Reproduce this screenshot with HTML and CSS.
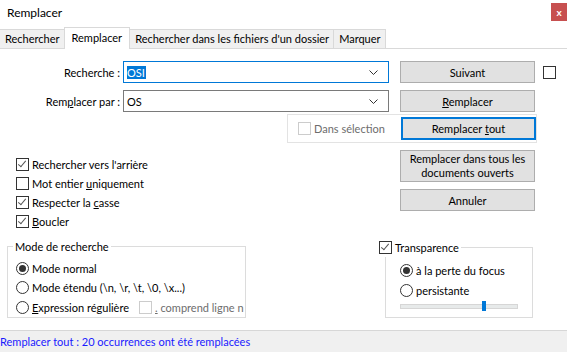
FILE: index.html
```html
<!DOCTYPE html>
<html lang="fr">
<head>
    <meta charset="UTF-8">
    <title>Remplacer</title>
    <link rel="stylesheet" href="styles.css">
</head>
<body>
    <!-- Title bar -->
    <div class="titlebar">
        <span class="title">Remplacer</span>
        <span class="close">x</span>
    </div>

    <!-- Tabs -->
    <div class="tabs">
        <span class="tab">Rechercher</span>
        <span class="tab active">Remplacer</span>
        <span class="tab">Rechercher dans les fichiers d'un dossier</span>
        <span class="tab">Marquer</span>
    </div>

    <div class="content">
        <!-- Search field -->
        <div class="row">
            <label class="field-label">Recherche :</label>
            <div class="combo focused">
                <span class="sel">OSI</span>
                <svg class="arrow" width="9" height="5" viewBox="0 0 9 5"><path d="M0.5 0.5 L4.5 4.5 L8.5 0.5" fill="none" stroke="#333"/></svg>
            </div>
            <button class="btn">Suivant</button>
            <span class="check small-gap"></span>
        </div>

        <!-- Replace field -->
        <div class="row">
            <label class="field-label">Rem<u>p</u>lacer par :</label>
            <div class="combo">
                <span>OS</span>
                <svg class="arrow" width="9" height="5" viewBox="0 0 9 5"><path d="M0.5 0.5 L4.5 4.5 L8.5 0.5" fill="none" stroke="#333"/></svg>
            </div>
            <button class="btn"><u>R</u>emplacer</button>
        </div>

        <!-- Selection box -->
        <div class="selection-box">
            <span class="opt disabled"><span class="check dim"></span><span>Dans sélection</span></span>
            <button class="btn default">Remplacer <u>t</u>out</button>
        </div>

        <!-- Options + more buttons -->
        <div class="middle">
            <div class="options">
                <span class="opt"><span class="check on"></span><span>Rechercher vers l'arrière</span></span>
                <span class="opt"><span class="check"></span><span>Mot entier <u>u</u>niquement</span></span>
                <span class="opt"><span class="check on"></span><span>Respecter la <u>c</u>asse</span></span>
                <span class="opt"><span class="check on"></span><span><u>B</u>oucler</span></span>
            </div>
            <div class="buttons">
                <button class="btn tall">Remplacer dans tous les<br>documents ouverts</button>
                <button class="btn">Annuler</button>
            </div>
        </div>

        <!-- Group boxes -->
        <div class="groups">
            <fieldset class="group mode">
                <legend>Mode de recherche</legend>
                <span class="opt"><span class="radio on"></span><span>Mode normal</span></span>
                <span class="opt"><span class="radio"></span><span>Mode étendu (\n, \r, \t, \0, \x...)</span></span>
                <span class="opt"><span class="radio"></span><span><u>E</u>xpression régulière</span>
                    <span class="opt disabled regex"><span class="check dim"></span><span><u>.</u> comprend ligne n</span></span>
                </span>
            </fieldset>
            <fieldset class="group transp">
                <legend><span class="opt"><span class="check on"></span><span>Transparence</span></span></legend>
                <span class="opt"><span class="radio on"></span><span>à la perte du focus</span></span>
                <span class="opt"><span class="radio"></span><span>persistante</span></span>
                <div class="slider"><span class="thumb"></span></div>
            </fieldset>
        </div>
    </div>

    <!-- Status bar -->
    <div class="status">Remplacer tout : 20 occurrences ont été remplacées</div>
</body>
</html>
```

FILE: styles.css
```css
body {
    font-family: Lato, "Noto Sans", sans-serif;
    font-size: 11px;
    color: #000;
    margin: 0;
    width: 567px;
    height: 352px;
    background-color: #fff;
    overflow: hidden;
    display: flex;
    flex-direction: column;
}

u {
    text-decoration: underline;
}

/* Title bar */
.titlebar {
    flex: none;
    height: 28px;
    display: flex;
    align-items: center;
    justify-content: space-between;
    padding-left: 7px;
    font-size: 12px;
}

.title {
    margin-top: -4px;
}

.close {
    width: 16px;
    height: 18px;
    margin-top: -5px;
    background-color: #c75050;
    color: #fff;
    font-weight: bold;
    font-size: 10px;
    display: flex;
    align-items: center;
    justify-content: center;
}

/* Tabs */
.tabs {
    flex: none;
    display: flex;
    align-items: flex-end;
    height: 20px;
    border-bottom: 1px solid #d9d9d9;
}

.tab {
    height: 18px;
    line-height: 18px;
    padding: 0 4px 0 5px;
    background-color: #f0f0f0;
    border: 1px solid #d9d9d9;
    border-bottom: none;
    margin-left: -1px;
}

.tab:first-child {
    margin-left: 0;
    border-left: none;
}

.tab.active {
    background-color: #fff;
    height: 21px;
    line-height: 19px;
    padding: 0 7px;
    margin-bottom: -1px;
    position: relative;
}

/* Main content */
.content {
    flex: 1;
    min-height: 0;
    padding-top: 12px;
}

.row {
    display: flex;
    align-items: center;
    height: 22px;
    margin-bottom: 7px;
}

.field-label {
    width: 120px;
    text-align: right;
    padding-right: 3px;
}

.combo {
    height: 20px;
    border: 1px solid #7a7a7a;
    display: flex;
    align-items: center;
    justify-content: space-between;
    padding: 0 10px 0 3px;
    width: 251px;
}

.combo.focused {
    border-color: #0078d7;
}

.sel {
    background-color: #0078d7;
    color: #fff;
    padding-right: 1px;
}

.btn {
    font-family: inherit;
    font-size: inherit;
    width: 135px;
    height: 22px;
    padding: 0;
    margin-left: 11px;
    background-color: #e1e1e1;
    border: 1px solid #adadad;
    color: #000;
}

.btn.default {
    border: 2px solid #0078d7;
    margin-left: 0;
    height: 23px;
}

.btn.tall {
    height: 32px;
    line-height: 14px;
}

.small-gap {
    margin-left: 8px;
}

/* Checkboxes and radios */
.opt {
    display: flex;
    align-items: center;
    height: 19px;
    white-space: nowrap;
}

.check, .radio {
    width: 11px;
    height: 11px;
    border: 1px solid #333;
    background-color: #fff;
    margin-right: 3px;
    flex: none;
    position: relative;
}

.check.on::after {
    content: "";
    position: absolute;
    left: 3px;
    top: 0px;
    width: 3px;
    height: 7px;
    border: solid #555;
    border-width: 0 1px 1px 0;
    transform: rotate(40deg);
}

.check.dim {
    border-color: #ccc;
}

.radio {
    border-radius: 50%;
}

.radio.on::after {
    content: "";
    position: absolute;
    left: 2px;
    top: 2px;
    width: 7px;
    height: 7px;
    border-radius: 50%;
    background-color: #333;
}

.disabled {
    color: #6d6d6d;
}

.selection-box {
    display: flex;
    align-items: center;
    justify-content: space-between;
    margin-left: 287px;
    width: 250px;
    height: 29px;
    margin-top: -5px;
    border: 1px solid #e3e3e3;
    padding-left: 10px;
    box-sizing: border-box;
}

.middle {
    display: flex;
    justify-content: space-between;
    margin-top: 7px;
}

.options {
    display: flex;
    flex-direction: column;
    padding-left: 16px;
    padding-top: 5px;
}

.buttons {
    display: flex;
    flex-direction: column;
    gap: 7px;
    margin-right: 32px;
}

.buttons .btn {
    margin-left: 0;
}

/* Group boxes */
.groups {
    display: flex;
    margin-top: 9px;
    align-items: flex-start;
}

.group {
    border: 1px solid #dcdcdc;
    margin: 0;
    padding: 0 0 2px 8px;
    box-sizing: border-box;
}

.group legend {
    padding: 0 2px;
    margin-left: -3px;
}

.mode {
    width: 239px;
    margin-left: 7px;
    height: 78px;
    padding-top: 6px;
}

.mode .opt {
    height: 19.3px;
}

.regex {
    margin-left: 10px;
}

.transp {
    margin-left: 139px;
    width: 148px;
    height: 80px;
    margin-top: -2px;
    padding-left: 14px;
    padding-top: 3px;
}

.transp .opt {
    height: 20px;
}

.transp legend {
    margin-left: -23px;
}

.transp legend .opt {
    height: 19px;
}

.slider {
    position: relative;
    width: 116px;
    height: 3px;
    margin-top: 4px;
    background-color: #e7eaea;
    border: 1px solid #d6d6d6;
}

.thumb {
    position: absolute;
    left: 81px;
    top: -4px;
    width: 4px;
    height: 10px;
    background-color: #0078d7;
}

/* Status bar */
.status {
    flex: none;
    height: 21px;
    line-height: 21px;
    background-color: #f0f0f0;
    border-top: 1px solid #d7d7d7;
    color: #1a1aff;
}
```
